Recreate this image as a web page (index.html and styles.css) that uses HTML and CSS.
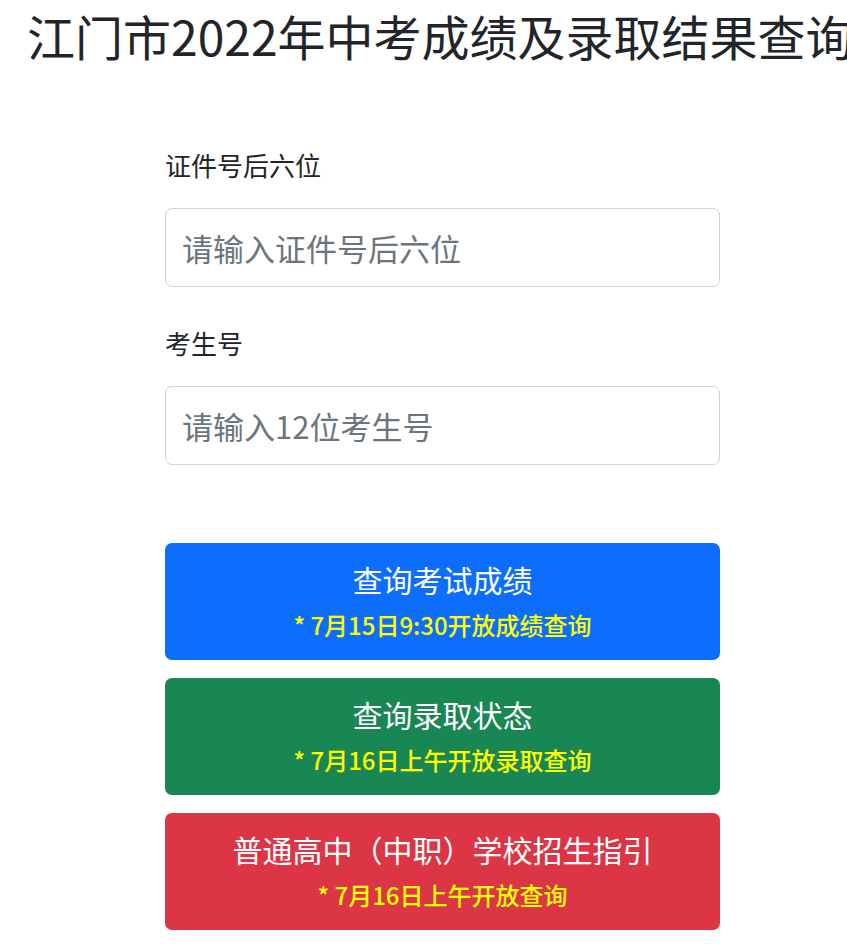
FILE: index.html
```html
<!DOCTYPE html>
<html lang="zh-CN">
<head>
<meta charset="utf-8">
<title>江门市2022年中考成绩及录取结果查询</title>
<link rel="stylesheet" href="styles.css">
</head>
<body>
<div class="page">
  <h1 class="page-title">江门市2022年中考成绩及录取结果查询</h1>
  <form class="query-form">
    <label class="field-label" for="idno">证件号后六位</label>
    <input class="field-input" id="idno" type="text" placeholder="请输入证件号后六位">
    <label class="field-label field-label-2" for="examno">考生号</label>
    <input class="field-input" id="examno" type="text" placeholder="请输入12位考生号">
    <div class="actions">
      <button type="button" class="action-btn btn-blue">
        <span class="btn-title">查询考试成绩</span>
        <span class="btn-note">* 7月15日9:30开放成绩查询</span>
      </button>
      <button type="button" class="action-btn btn-green">
        <span class="btn-title">查询录取状态</span>
        <span class="btn-note">* 7月16日上午开放录取查询</span>
      </button>
      <button type="button" class="action-btn btn-red">
        <span class="btn-title">普通高中（中职）学校招生指引</span>
        <span class="btn-note">* 7月16日上午开放查询</span>
      </button>
    </div>
  </form>
</div>
</body>
</html>
```

FILE: styles.css
```css
html, body {
  margin: 0;
  padding: 0;
  background: #fff;
}

body {
  font-family: "Noto Sans CJK SC", "Noto Sans", sans-serif;
  color: #212529;
  overflow-x: hidden;
}

.page {
  width: 847px;
  overflow: hidden;
}

.page-title {
  margin: 6px 0 0 0;
  padding-left: 27px;
  font-size: 48px;
  line-height: 58px;
  font-weight: 400;
  white-space: nowrap;
  color: #212529;
}

.query-form {
  display: flex;
  flex-direction: column;
  width: 555px;
  margin: 83px 0 0 165px;
}

.field-label {
  display: block;
  font-size: 26px;
  line-height: 36px;
  color: #212529;
}

.field-label-2 {
  margin-top: 38px;
}

.field-input {
  box-sizing: border-box;
  margin-top: 25px;
  width: 555px;
  height: 79px;
  padding: 0 16px;
  border: 1px solid #ced4da;
  border-radius: 7px;
  font-family: inherit;
  font-size: 31px;
  color: #212529;
  background: #fff;
  outline: none;
}

.field-input::placeholder {
  color: #6c757d;
  opacity: 1;
}

.actions {
  display: flex;
  flex-direction: column;
  gap: 18px;
  margin-top: 78px;
}

.action-btn {
  box-sizing: border-box;
  display: flex;
  flex-direction: column;
  align-items: center;
  width: 555px;
  height: 117px;
  padding: 14px 0 0 0;
  border: none;
  border-radius: 7px;
  font-family: inherit;
  color: #fff;
  cursor: pointer;
}

.btn-title {
  font-size: 30px;
  line-height: 45px;
  font-weight: 400;
}

.btn-note {
  font-size: 24px;
  line-height: 46px;
  font-weight: 500;
  color: #ffff00;
}

.btn-blue { background: #0d6efd; }
.btn-green { background: #198754; }
.btn-red { background: #dc3545; }
```
